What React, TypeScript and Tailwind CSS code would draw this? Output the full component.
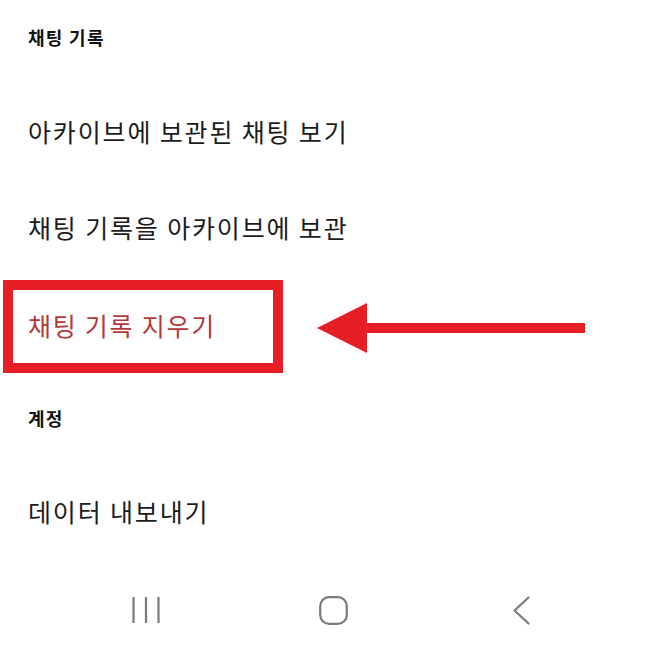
export default function App() {
  return (
    <div className="relative w-[667px] h-[660px] overflow-hidden bg-white font-['Noto_Sans_CJK_KR','Noto_Sans',sans-serif] text-[#1c1c1c]">
      <div className="flex h-[74px] items-center pl-[28px] text-[18px] font-bold tracking-[1.3px] text-[#111]">채팅 기록</div>

      <div className="mt-[10px] flex h-[96px] items-center pl-[28px] text-[25px] tracking-[1.85px]">아카이브에 보관된 채팅 보기</div>
      <div className="flex h-[96px] items-center pl-[28px] text-[25px] tracking-[1.85px]">채팅 기록을 아카이브에 보관</div>

      <div className="relative mt-[2px] flex h-[96px] items-center pl-[28px] text-[25px] tracking-[1.75px] text-[#b5393b]">
        채팅 기록 지우기
        {/* annotation box + arrow */}
        <div className="absolute left-[3px] top-[2px] h-[93px] w-[280px] border-[10px] border-[#e61e25]" />
        <svg className="absolute left-[317px] top-[25px]" width="268" height="50" viewBox="0 0 268 50">
          <polygon points="0,25 50,0 50,50" fill="#e61e25" />
          <rect x="49" y="20" width="219" height="10" fill="#e61e25" />
        </svg>
      </div>

      <div className="flex h-[88px] items-center pl-[28px] text-[18px] font-bold tracking-[1.3px] text-[#111]">계정</div>
      <div className="mt-[2px] flex h-[96px] items-center pl-[28px] text-[25px] tracking-[1.85px]">데이터 내보내기</div>

      <div className="flex h-[100px] items-center justify-center">
        <div className="flex w-[188px] justify-center">
          <svg width="28" height="26" viewBox="0 0 28 26" stroke="#7a7a7a" strokeWidth="2.2">
            <line x1="1.5" y1="0" x2="1.5" y2="26" />
            <line x1="14" y1="0" x2="14" y2="26" />
            <line x1="26.5" y1="0" x2="26.5" y2="26" />
          </svg>
        </div>
        <div className="flex w-[188px] justify-center">
          <svg width="29" height="29" viewBox="0 0 29 29" fill="none" stroke="#7a7a7a" strokeWidth="2.2">
            <rect x="1.2" y="1.2" width="26.6" height="26.6" rx="9" />
          </svg>
        </div>
        <div className="flex w-[188px] justify-center">
          <svg width="17" height="29" viewBox="0 0 17 29" fill="none" stroke="#7a7a7a" strokeWidth="2.2" strokeLinecap="round" strokeLinejoin="round">
            <polyline points="15.5,1.5 1.5,14.5 15.5,27.5" />
          </svg>
        </div>
      </div>
    </div>
  );
}
